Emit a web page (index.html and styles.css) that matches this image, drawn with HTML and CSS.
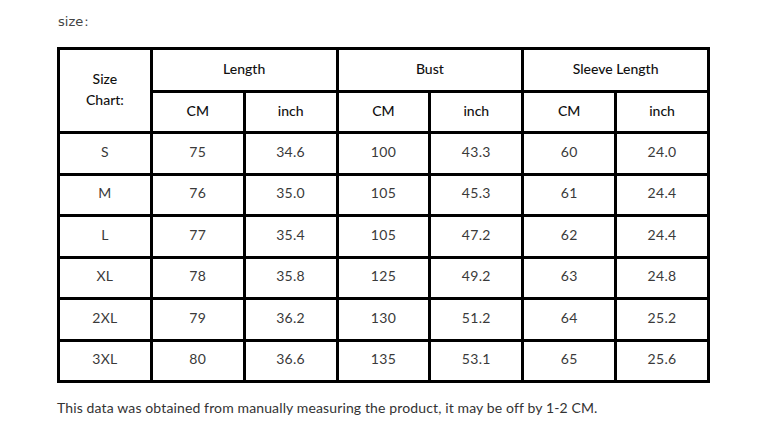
FILE: index.html
```html
<!DOCTYPE html>
<html lang="en">
<head>
<meta charset="utf-8">
<title>Size chart</title>
<link rel="stylesheet" href="styles.css">
</head>
<body>
<div class="page">
  <p class="label">size<span class="colon">:</span></p>
  <table class="chart">
    <colgroup>
      <col><col><col><col><col><col><col>
    </colgroup>
    <thead>
      <tr class="head1">
        <th rowspan="2" class="corner">Size<br>Chart:</th>
        <th colspan="2">Length</th>
        <th colspan="2">Bust</th>
        <th colspan="2">Sleeve Length</th>
      </tr>
      <tr class="head2">
        <th>CM</th><th>inch</th>
        <th>CM</th><th>inch</th>
        <th>CM</th><th>inch</th>
      </tr>
    </thead>
    <tbody>
      <tr><td>S</td><td>75</td><td>34.6</td><td>100</td><td>43.3</td><td>60</td><td>24.0</td></tr>
      <tr><td>M</td><td>76</td><td>35.0</td><td>105</td><td>45.3</td><td>61</td><td>24.4</td></tr>
      <tr><td>L</td><td>77</td><td>35.4</td><td>105</td><td>47.2</td><td>62</td><td>24.4</td></tr>
      <tr><td>XL</td><td>78</td><td>35.8</td><td>125</td><td>49.2</td><td>63</td><td>24.8</td></tr>
      <tr><td>2XL</td><td>79</td><td>36.2</td><td>130</td><td>51.2</td><td>64</td><td>25.2</td></tr>
      <tr><td>3XL</td><td>80</td><td>36.6</td><td>135</td><td>53.1</td><td>65</td><td>25.6</td></tr>
    </tbody>
  </table>
  <p class="note">This data was obtained from manually measuring the product, it may be off by 1-2 CM.</p>
</div>
</body>
</html>
```
FILE: styles.css
```css
html, body {
  margin: 0;
  padding: 0;
  background: #ffffff;
}

.page {
  padding: 12px 0 0 57px;
  font-family: "Lato", "Open Sans", sans-serif;
  color: #333333;
}

.label {
  margin: 0 0 15px 1px;
  font-family: "DejaVu Sans", sans-serif;
  font-size: 13px;
  line-height: 20px;
  color: #444444;
}

.label .colon {
  margin-left: 1px;
}

.chart {
  border-collapse: collapse;
  table-layout: fixed;
  width: 653px;
  border: 3px solid #000;
}

.chart th,
.chart td {
  border: 3px solid #000;
  text-align: center;
  vertical-align: middle;
  padding: 0 0 4px 0;
  font-size: 14px;
}

.chart th {
  font-weight: 500;
  color: #111111;
}

.chart .corner {
  line-height: 21px;
  padding-bottom: 4px;
}

.head1 {
  height: 43px;
}

.head2 {
  height: 41px;
}

.chart tbody tr {
  height: 41.5px;
}

.chart td {
  color: #3a3a3a;
  letter-spacing: 0.3px;
}

.note {
  margin: 15px 0 0 0;
  font-size: 14px;
  line-height: 20px;
  letter-spacing: 0.13px;
  color: #333333;
}
```
